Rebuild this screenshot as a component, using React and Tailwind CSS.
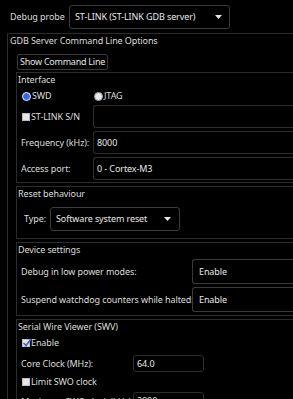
import React from "react";

function Arrow() {
  return (
    <svg width="7" height="4" viewBox="0 0 7 4" className="shrink-0">
      <path d="M0 0 L7 0 L3.5 4 Z" fill="#e8e8e8" />
    </svg>
  );
}

function Check({ checked }) {
  return (
    <span className="relative w-[8px] h-[8px] bg-[#e6e6e6] border border-[#bdbdbd] shrink-0">
      {checked && (
        <svg width="10" height="9" viewBox="0 0 10 9" className="absolute left-[-1px] top-[-2px]">
          <path d="M1.5 5 L4 7.5 L9 1" stroke="#3b63e0" strokeWidth="1.6" fill="none" />
        </svg>
      )}
    </span>
  );
}

function Radio({ on }) {
  return on ? (
    <span className="w-[9px] h-[9px] rounded-full bg-[#3a68e8] border-[1.5px] border-[#f0f0f0] shrink-0" />
  ) : (
    <span className="w-[9px] h-[9px] rounded-full bg-[#e8e8e8] border border-[#9a9a9a] shrink-0" />
  );
}

function Group({ title, children, className = "" }) {
  return (
    <div className={"border-l border-t border-b border-[#2c2c2c] " + className}>
      <div className="h-[14px] leading-[14px] pl-[1px]">{title}</div>
      {children}
    </div>
  );
}

export default function App() {
  return (
    <div
      className="w-[293px] h-[399px] overflow-hidden bg-black text-[#dcdcdc] text-[9px] tracking-[-0.1px] leading-[14px] whitespace-nowrap"
      style={{ fontFamily: '"Noto Sans", "Open Sans", sans-serif' }}
    >
      {/* Top row */}
      <div className="h-[33px] flex items-start pl-[10px]">
        <div className="w-[59px] shrink-0 mt-[10px]">Debug probe</div>
        <div className="mt-[5px] w-[161px] h-[24px] border border-[#3c3c3c] rounded-[3px] flex items-center justify-between pl-[5px] pr-[7px] text-[#e8e8e8]">
          <span>ST-LINK (ST-LINK GDB server)</span>
          <Arrow />
        </div>
      </div>

      {/* GDB group */}
      <div className="ml-[7px] border-l border-t border-[#2c2c2c]">
        <div className="h-[14px] leading-[14px] pl-[2px]">GDB Server Command Line Options</div>
        <div className="mt-[6px] ml-[9px] w-[91px] h-[16px] border border-[#3a3a3a] rounded-[2px] flex items-center justify-center text-[#e4e4e4] tracking-[-0.25px]">
          Show Command Line
        </div>

        <div className="ml-[8px] mt-[2px] flex flex-col">
          {/* Interface */}
          <Group title="Interface">
            <div className="h-[18px] flex items-center">
              <div className="w-[76px] shrink-0 flex items-center pl-[5px] gap-[1px]">
                <Radio on />
                <span>SWD</span>
              </div>
              <div className="flex items-center gap-[1px] pl-[1px]">
                <Radio />
                <span>JTAG</span>
              </div>
            </div>
            <div className="h-[23px] flex items-center">
              <div className="w-[76px] shrink-0 flex items-center pl-[5px] gap-[1px]">
                <Check />
                <span>ST-LINK S/N</span>
              </div>
              <div className="flex-1 h-[23px] border-l border-t border-b border-[#2e2e2e] rounded-l-[3px]" />
            </div>
            <div className="mt-[3px] h-[23px] flex items-center">
              <div className="w-[76px] shrink-0 pl-[4px]">Frequency (kHz):</div>
              <div className="flex-1 h-[23px] border-l border-t border-b border-[#2e2e2e] rounded-l-[3px] flex items-center pl-[3px] text-[#e8e8e8]">
                8000
              </div>
            </div>
            <div className="mt-[3px] h-[23px] flex items-center">
              <div className="w-[76px] shrink-0 pl-[4px]">Access port:</div>
              <div className="flex-1 h-[23px] border-l border-t border-b border-[#2e2e2e] rounded-l-[3px] flex items-center pl-[3px] text-[#e8e8e8]">
                0 - Cortex-M3
              </div>
            </div>
            <div className="h-[2px]" />
          </Group>

          {/* Reset */}
          <Group title="Reset behaviour" className="mt-[3px]">
            <div className="mt-[6px] h-[24px] flex items-center">
              <div className="w-[33px] shrink-0 pl-[7px]">Type:</div>
              <div className="w-[130px] h-[24px] border border-[#3c3c3c] rounded-[3px] flex items-center justify-between pl-[5px] pr-[8px] text-[#e8e8e8]">
                <span>Software system reset</span>
                <Arrow />
              </div>
            </div>
            <div className="h-[7px]" />
          </Group>

          {/* Device settings */}
          <Group title="Device settings" className="mt-[3px]">
            <div className="mt-[2px] h-[25px] flex items-center">
              <div className="w-[175px] shrink-0 pl-[4px]">Debug in low power modes:</div>
              <div className="flex-1 h-[25px] border-l border-t border-b border-[#3a3a3a] rounded-l-[3px] flex items-center pl-[6px] text-[#e8e8e8]">
                Enable
              </div>
            </div>
            <div className="mt-[3px] h-[25px] flex items-center">
              <div className="w-[175px] shrink-0 pl-[4px]">Suspend watchdog counters while halted:</div>
              <div className="flex-1 h-[25px] border-l border-t border-b border-[#3a3a3a] rounded-l-[3px] flex items-center pl-[6px] text-[#e8e8e8]">
                Enable
              </div>
            </div>
            <div className="h-[3px]" />
          </Group>

          {/* SWV */}
          <Group title="Serial Wire Viewer (SWV)" className="mt-[3px]">
            <div className="h-[17px] flex items-center pl-[5px] gap-[1px]">
              <Check checked />
              <span>Enable</span>
            </div>
            <div className="mt-[4px] h-[17px] flex items-center">
              <div className="w-[116px] shrink-0 pl-[4px]">Core Clock (MHz):</div>
              <div className="w-[71px] h-[17px] border border-[#2e2e2e] rounded-[3px] flex items-center pl-[3px] text-[#e8e8e8]">
                64.0
              </div>
            </div>
            <div className="h-[20px] flex items-center pl-[5px] gap-[1px]">
              <Check />
              <span>Limit SWO clock</span>
            </div>
            <div className="h-[17px] flex items-start">
              <div className="w-[116px] shrink-0 pl-[4px] pt-[3px] overflow-hidden">Maximum SWO clock (kHz):</div>
              <div className="w-[71px] h-[17px] border border-[#2e2e2e] rounded-[3px] flex items-center pl-[3px] text-[#e8e8e8]">
                2000
              </div>
            </div>
          </Group>
        </div>
      </div>
    </div>
  );
}
